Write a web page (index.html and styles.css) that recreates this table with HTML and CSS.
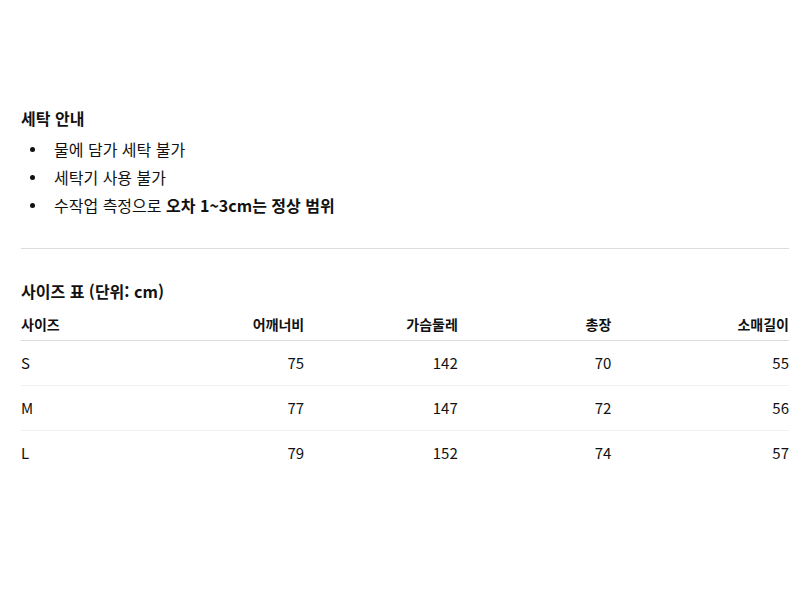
FILE: index.html
```html
<!DOCTYPE html>
<html lang="ko">
<head>
<meta charset="utf-8">
<link rel="stylesheet" href="styles.css">
</head>
<body>
<main class="page">
  <section class="care">
    <h3 class="title">세탁 안내</h3>
    <ul class="care-list">
      <li><span>물에 담가 세탁 불가</span></li>
      <li><span>세탁기 사용 불가</span></li>
      <li><span>수작업 측정으로 <strong>오차 1~3cm는 정상 범위</strong></span></li>
    </ul>
  </section>
  <hr class="divider">
  <section class="size">
    <h3 class="title">사이즈 표 (단위: cm)</h3>
    <table class="size-table">
      <thead>
        <tr><th>사이즈</th><th>어깨너비</th><th>가슴둘레</th><th>총장</th><th>소매길이</th></tr>
      </thead>
      <tbody>
        <tr><td>S</td><td>75</td><td>142</td><td>70</td><td>55</td></tr>
        <tr><td>M</td><td>77</td><td>147</td><td>72</td><td>56</td></tr>
        <tr><td>L</td><td>79</td><td>152</td><td>74</td><td>57</td></tr>
      </tbody>
    </table>
  </section>
</main>
</body>
</html>
```
FILE: styles.css
```css
html, body {
  margin: 0;
  padding: 0;
  background: #fff;
}
body {
  font-family: "Noto Sans CJK KR", "Noto Sans", sans-serif;
  font-size: 15px;
  color: #111;
}
.page {
  padding: 107px 11px 0 21px;
}
.title {
  font-size: 16px;
  font-weight: 700;
  margin: 0;
  line-height: 22px;
}
.care-list {
  list-style: none;
  margin: 6px 0 0;
  padding: 0;
}
.care-list li {
  display: flex;
  align-items: center;
  font-size: 16px;
  line-height: 28px;
}
.care-list li::before {
  content: "";
  width: 5px;
  height: 5px;
  border-radius: 50%;
  background: #111;
  margin: 1px 19px 0 9px;
  flex: none;
}
.care-list strong {
  font-weight: 700;
}
.divider {
  border: 0;
  border-top: 1px solid #ddd;
  margin: 29px 0 31px;
}
.size .title {
  margin-bottom: 8px;
}
.size-table {
  width: 100%;
  border-collapse: collapse;
  table-layout: fixed;
}
.size-table th,
.size-table td {
  box-sizing: border-box;
  width: 20%;
  text-align: right;
  padding-right: 24px;
  padding-left: 0;
}
.size-table th:last-child,
.size-table td:last-child {
  padding-right: 0;
}
.size-table th:first-child,
.size-table td:first-child {
  text-align: left;
}
.size-table th {
  font-size: 14px;
  font-weight: 700;
  line-height: 20px;
  padding-top: 4px;
  padding-bottom: 6px;
  border-bottom: 1px solid #ddd;
}
.size-table td {
  line-height: 21px;
  padding-top: 11px;
  padding-bottom: 12px;
  border-bottom: 1px solid #f0f0f0;
}
.size-table tr:last-child td {
  border-bottom: 0;
}
```
